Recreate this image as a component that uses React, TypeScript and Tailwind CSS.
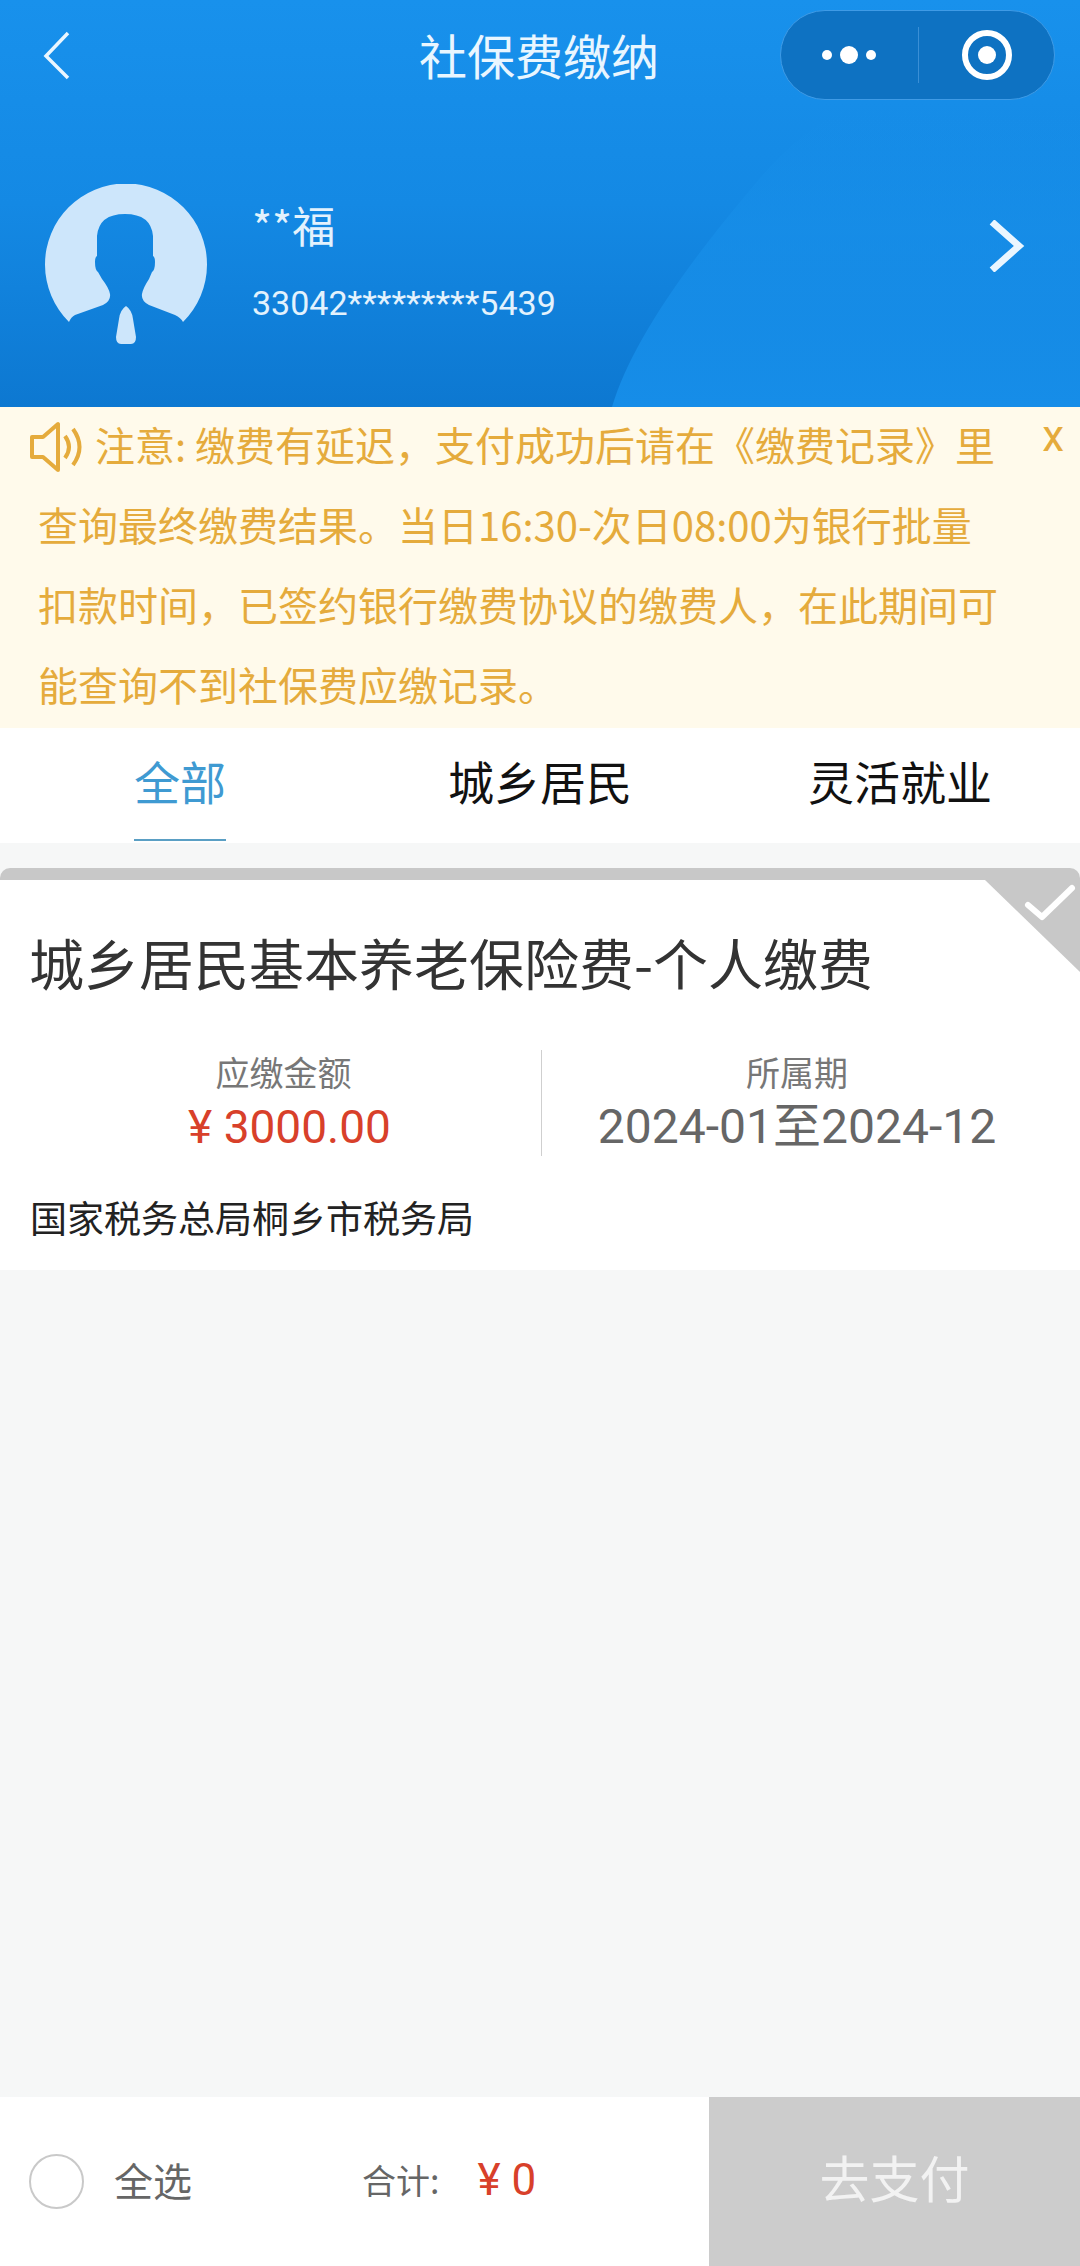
function Avatar() {
  return (
    <svg width="162" height="162" viewBox="0 0 162 162" className="shrink-0">
      <path
        fill="#cde6fb"
        d="M24 138 A81 81 0 1 1 138 138 Q136 134 130 131 L104 121 Q96 117 97 110 Q98 104 104 95 L107 88 Q110 86 110 78 Q110 73 108 72 L108 52 Q106 30 80 30 Q54 30 52 52 L52 72 Q50 73 50 78 Q50 86 53 88 L57 95 Q64 104 65 110 Q66 117 58 121 L30 131 Q26 133 24 138Z"
      />
      <path fill="#cde6fb" d="M81 122 Q75 126 74 135 L71 153 Q71 160 76 160 L86 160 Q91 160 91 153 L88 135 Q87 126 81 122Z" />
    </svg>
  );
}

function Speaker() {
  return (
    <svg width="58" height="52" viewBox="0 0 58 52" fill="none" stroke="#e5ab3c" strokeWidth="4" className="inline-block align-[-12px] mr-[8px]">
      <path d="M3 16 L14 16 L29 3 L29 49 L14 36 L3 36 Z" strokeLinejoin="round" />
      <path d="M36 15 Q44 26 36 37" />
      <path d="M44 8 Q57 26 44 44" />
    </svg>
  );
}

export default function App() {
  return (
    <div className="min-h-[2266px] flex flex-col bg-[#f6f7f7] font-['Noto_Sans_CJK_SC','Noto_Sans',sans-serif]">
      {/* Header */}
      <header className="relative h-[407px] overflow-hidden bg-gradient-to-b from-[#1891ec] via-[#1489e4] to-[#0d78d1] text-white">
        <svg className="absolute inset-0" width="1080" height="407" viewBox="0 0 1080 407">
          <defs>
            <linearGradient id="sheen" x1="0" y1="0" x2="0" y2="1">
              <stop offset="0" stopColor="#1890ea" stopOpacity="0" />
              <stop offset="0.4" stopColor="#1890ea" stopOpacity="0.6" />
              <stop offset="1" stopColor="#168de8" />
            </linearGradient>
          </defs>
          <path fill="url(#sheen)" d="M612 407 Q636 325 750 190 Q790 140 840 110 L1080 110 L1080 407 Z" />
        </svg>

        <div className="relative grid grid-cols-[1fr_auto_1fr] items-center pt-[10px] h-[100px]">
          <svg width="30" height="50" viewBox="0 0 30 50" fill="none" stroke="#eaf6ff" strokeWidth="3.5" className="ml-[42px]">
            <path d="M26 3 L4 26 L26 48" />
          </svg>
          <div className="text-[48px] leading-none -mt-[3px] -ml-[2px] text-[#e9f6ff]">社保费缴纳</div>
          <div className="justify-self-end mr-[25px] w-[275px] h-[90px] rounded-full bg-[#0e72c2] border border-[#3f9be6] flex items-center">
            <div className="flex-1 flex items-center justify-center gap-[8px] pr-[2px]">
              <span className="w-[10px] h-[10px] rounded-full bg-white" />
              <span className="w-[18px] h-[18px] rounded-full bg-white" />
              <span className="w-[10px] h-[10px] rounded-full bg-white" />
            </div>
            <div className="w-px h-[56px] bg-[#3a8fd6]" />
            <div className="flex-1 flex items-center justify-center">
              <div className="w-[50px] h-[50px] rounded-full border-[6px] border-white flex items-center justify-center">
                <span className="w-[18px] h-[18px] rounded-full bg-white" />
              </div>
            </div>
          </div>
        </div>

        <div className="relative flex items-center mt-[84px] pl-[45px] pr-[55px]">
          <Avatar />
          <div className="ml-[45px] flex-1 self-start flex flex-col text-[#e3f2fd]">
            <div className="text-[43px] leading-[56px] mt-[12px]">**福</div>
            <div className="text-[34px] leading-[40px] mt-[31px] font-['Roboto','Noto_Sans_CJK_SC',sans-serif]">33042*********5439</div>
          </div>
          <svg width="37" height="52" viewBox="0 0 37 52" fill="none" stroke="#eaf6ff" strokeWidth="7" className="-mt-[38px]">
            <path d="M4 2 L31 26 L4 50" />
          </svg>
        </div>
      </header>

      {/* Notice */}
      <section className="relative h-[321px] bg-[#fffaeb] pl-[38px] pr-[78px] text-[40px] leading-[80px] text-[#e5ab3c]">
        <div className="-mt-[3px]">
          <p className="-ml-[9px] w-[990px]">
            <Speaker />
            注意: 缴费有延迟，支付成功后请在《缴费记录》里
          </p>
          <p className="w-[980px]">查询最终缴费结果。当日16:30-次日08:00为银行批量</p>
          <p className="w-[980px]">扣款时间，已签约银行缴费协议的缴费人，在此期间可</p>
          <p className="w-[980px]">能查询不到社保费应缴记录。</p>
        </div>
        <span className="absolute top-0 right-[16px] text-[44px] leading-[58px] font-['Roboto',sans-serif]">x</span>
      </section>

      {/* Tabs */}
      <nav className="h-[115px] bg-white grid grid-cols-3 text-[46px]">
        <div className="relative flex items-center justify-center text-[#3f9ad2] pb-[10px]">
          全部
          <span className="absolute bottom-[2px] w-[92px] h-[2px] bg-[#5a9fc4]" />
        </div>
        <div className="flex items-center justify-center text-[#111] pb-[10px]">城乡居民</div>
        <div className="flex items-center justify-center text-[#111] pb-[10px]">灵活就业</div>
      </nav>

      {/* Card */}
      <article className="relative mt-[25px] h-[402px] bg-white border-t-[12px] border-[#c8c8c8] rounded-t-[10px]">
        <svg className="absolute top-0 right-0" width="95" height="92" viewBox="0 0 95 92">
          <path fill="#c8c8c8" d="M0 0 L95 0 L95 92 Z" />
          <path d="M43 25 L57 37 L87 8" fill="none" stroke="#fff" strokeWidth="6" strokeLinecap="round" strokeLinejoin="round" />
        </svg>
        <h2 className="pl-[29px] pt-[42px] text-[55px] leading-[78px] font-normal text-[#333]">城乡居民基本养老保险费-个人缴费</h2>
        <div className="mt-[50px] grid grid-cols-[542px_1fr]">
          <div className="flex flex-col items-center border-r border-[#cfcfcf] h-[106px] pl-[26px]">
            <div className="text-[34px] leading-[46px] -mt-px text-[#777]">应缴金额</div>
            <div className="text-[46px] leading-[58px] mt-[3px] ml-[12px] text-[#d8402a] font-['Roboto','Noto_Sans_CJK_SC',sans-serif]">¥ 3000.00</div>
          </div>
          <div className="flex flex-col items-center h-[106px] pr-[28px]">
            <div className="text-[34px] leading-[46px] -mt-px text-[#777]">所属期</div>
            <div className="text-[48px] leading-[58px] mt-[3px] text-[#666] font-['Roboto','Noto_Sans_CJK_SC',sans-serif]">2024-01至2024-12</div>
          </div>
        </div>
        <p className="pl-[30px] mt-[34px] text-[37px] leading-[54px] text-[#222]">国家税务总局桐乡市税务局</p>
      </article>

      {/* Bottom bar */}
      <footer className="mt-auto h-[169px] bg-white flex items-stretch">
        <div className="flex-1 flex items-center pl-[29px] pb-[4px]">
          <span className="w-[55px] h-[55px] rounded-full border-2 border-[#c9c9c9] mt-[4px]" />
          <span className="ml-[30px] text-[39px] text-[#666]">全选</span>
          <span className="ml-[170px] text-[34px] text-[#666]">合计:</span>
          <span className="ml-[38px] text-[44px] text-[#d8402a] font-['Roboto','Noto_Sans_CJK_SC',sans-serif]">¥ 0</span>
        </div>
        <button className="w-[371px] bg-[#cccccc] text-[50px] text-[#f2f2f2] pb-[10px]">去支付</button>
      </footer>
    </div>
  );
}
